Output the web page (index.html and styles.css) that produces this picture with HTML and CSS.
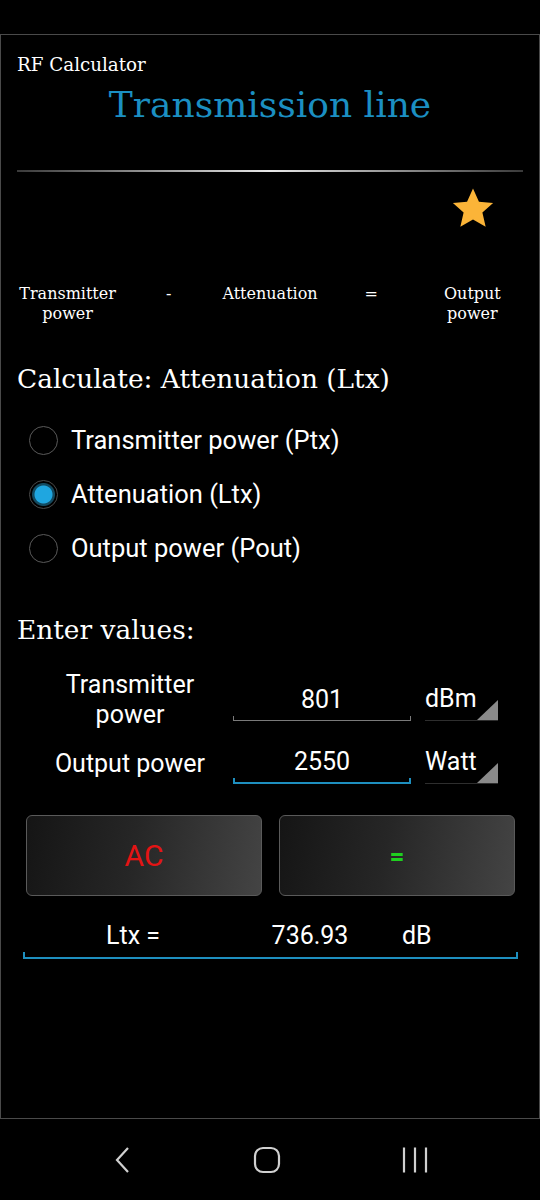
FILE: index.html
```html
<!DOCTYPE html>
<html>
<head>
<meta charset="utf-8">
<link rel="stylesheet" href="styles.css">
</head>
<body>
<div class="status"></div>
<div class="frame">
  <div class="app-name">RF Calculator</div>
  <div class="title">Transmission line</div>
  <div class="sep"></div>
  <div class="star-row">
    <svg class="star" viewBox="0 0 24 24" width="46" height="46"><path d="M12 1.8l3.1 6.9 7.4.7-5.6 5 1.7 7.4L12 18l-6.6 3.8 1.7-7.4-5.6-5 7.4-.7z" fill="#fbb438"/></svg>
  </div>
  <div class="equation">
    <div class="eq-cell">Transmitter<br>power</div>
    <div class="eq-cell">-</div>
    <div class="eq-cell">Attenuation</div>
    <div class="eq-cell">=</div>
    <div class="eq-cell">Output<br>power</div>
  </div>
  <div class="heading calc">Calculate: Attenuation (Ltx)</div>
  <div class="radios">
    <div class="radio"><span class="dot"></span><span>Transmitter power (Ptx)</span></div>
    <div class="radio"><span class="dot on"></span><span>Attenuation (Ltx)</span></div>
    <div class="radio"><span class="dot"></span><span>Output power (Pout)</span></div>
  </div>
  <div class="heading enter">Enter values:</div>
  <div class="fields">
    <div class="field f1">
      <div class="label">Transmitter<br>power</div>
      <div class="input"><span>801</span></div>
      <div class="spinner"><span>dBm</span></div>
    </div>
    <div class="field f2">
      <div class="label">Output power</div>
      <div class="input active"><span>2550</span></div>
      <div class="spinner"><span>Watt</span></div>
    </div>
  </div>
  <div class="buttons">
    <div class="btn ac">AC</div>
    <div class="btn eq">=</div>
  </div>
  <div class="result">
    <span class="r-label">Ltx =</span>
    <span class="r-val">736.93</span>
    <span class="r-unit">dB</span>
  </div>
</div>
<div class="navbar">
  <svg width="20" height="30" viewBox="0 0 20 30"><path d="M15 3 L4 15 L15 27" fill="none" stroke="#d0d0d0" stroke-width="2.2"/></svg>
  <svg width="28" height="28" viewBox="0 0 28 28"><rect x="2" y="2" width="24" height="24" rx="8" fill="none" stroke="#d0d0d0" stroke-width="2.2"/></svg>
  <svg width="28" height="28" viewBox="0 0 28 28"><path d="M3 1.5V26.5M14 1.5V26.5M25 1.5V26.5" stroke="#d0d0d0" stroke-width="2.2"/></svg>
</div>
</body>
</html>
```
FILE: styles.css
```css
html, body {
  margin: 0;
  padding: 0;
  background: #000;
}
body {
  width: 540px;
  height: 1200px;
  color: #fff;
  font-family: "DejaVu Serif", "Liberation Serif", serif;
}
.status {
  height: 34px;
}
.frame {
  box-sizing: border-box;
  height: 1085px;
  border: 1.5px solid #4a4a4a;
  padding: 0 16px;
}
.app-name {
  font-size: 18.3px;
  line-height: 24px;
  margin-top: 18px;
}
.title {
  font-size: 36px;
  color: #1b8fc2;
  text-align: center;
  line-height: 44px;
  margin-top: 6px;
}
.sep {
  height: 2px;
  margin-top: 43px;
  background: linear-gradient(to right, #3a3a3a, #e8e8e8 50%, #3a3a3a);
}
.star-row {
  display: flex;
  justify-content: flex-end;
  padding-right: 27px;
  margin-top: 13px;
  height: 46px;
}
.equation {
  display: grid;
  grid-template-columns: repeat(5, 1fr);
  margin-top: 53px;
  font-size: 16px;
  line-height: 20px;
  text-align: center;
}
.heading {
  font-size: 26.4px;
  line-height: 32px;
}
.calc {
  margin-top: 39px;
}
.radios {
  display: flex;
  flex-direction: column;
  gap: 22px;
  margin-top: 29px;
  padding-left: 12px;
  font-family: Roboto, "Noto Sans", sans-serif;
  font-size: 25.5px;
}
.radio {
  display: flex;
  align-items: center;
  gap: 13px;
  height: 32px;
}
.dot {
  box-sizing: border-box;
  width: 29px;
  height: 29px;
  border-radius: 50%;
  border: 1.5px solid #5a5a5a;
  flex: none;
}
.dot.on {
  border-color: #4a4a4a;
  background: radial-gradient(circle, #1fa6e0 0 8.5px, #134a60 9.5px 11px, #000 12px);
}
.enter {
  margin-top: 50px;
}
.fields {
  font-family: Roboto, "Noto Sans", sans-serif;
  font-size: 25px;
  margin-top: 21px;
  display: flex;
  flex-direction: column;
  gap: 19px;
}
.field {
  display: grid;
  grid-template-columns: 216px 178px 87px;
  align-items: end;
}
.label {
  text-align: center;
  line-height: 30px;
  padding-left: 10px;
  align-self: center;
}
.f1 .label {
  padding-top: 3px;
  margin-bottom: -3px;
}
.input {
  position: relative;
  text-align: center;
  height: 36px;
  line-height: 32px;
  border-bottom: 1px solid #7a7a7a;
  margin-bottom: 6px;
}
.input::before, .input::after {
  content: "";
  position: absolute;
  bottom: -1px;
  width: 1px;
  height: 5px;
  background: #7a7a7a;
}
.input::before { left: 0; }
.input::after { right: 0; }
.input.active {
  border-bottom: 2px solid #1e8fbf;
}
.input.active::before, .input.active::after {
  background: #1e8fbf;
  width: 2px;
  height: 6px;
  bottom: -2px;
}
.spinner {
  position: relative;
  margin-left: 14px;
  height: 36px;
  line-height: 30px;
  border-bottom: 1px solid #2e2e2e;
  margin-bottom: 6px;
}
.spinner::after {
  content: "";
  position: absolute;
  right: 0;
  bottom: 0;
  width: 21px;
  height: 20px;
  background: #8a8a8a;
  clip-path: polygon(100% 0, 100% 100%, 0 100%);
}
.f2 .label {
  align-self: start;
  padding-top: 3px;
}
.buttons {
  display: grid;
  grid-template-columns: 1fr 1fr;
  gap: 17px;
  margin: 25px 8px 0 9px;
  font-family: Roboto, "Noto Sans", sans-serif;
}
.btn {
  height: 79px;
  border: 1px solid #5a5a5a;
  border-radius: 6px;
  background: linear-gradient(100deg, #151515, #262626 45%, #444 100%);
  display: flex;
  align-items: center;
  justify-content: center;
  font-size: 30px;
}
.ac { color: #e41414; }
.eq { color: #1fd01f; font-weight: bold; font-size: 26px; }
.result {
  position: relative;
  margin: 24px 5px 0 6px;
  height: 37px;
  display: grid;
  grid-template-columns: 220px 134px 1fr;
  font-family: Roboto, "Noto Sans", sans-serif;
  font-size: 25px;
  line-height: 32px;
  border-bottom: 2px solid #1e8fbf;
}
.result::before, .result::after {
  content: "";
  position: absolute;
  bottom: -2px;
  width: 2px;
  height: 7px;
  background: #1e8fbf;
}
.result::before { left: 0; }
.result::after { right: 0; }
.r-label { text-align: center; }
.r-val { text-align: center; }
.r-unit { padding-left: 25px; }
.navbar {
  height: 81px;
  display: flex;
  align-items: center;
  justify-content: center;
  gap: 120px;
  padding-left: 1px;
}
```
